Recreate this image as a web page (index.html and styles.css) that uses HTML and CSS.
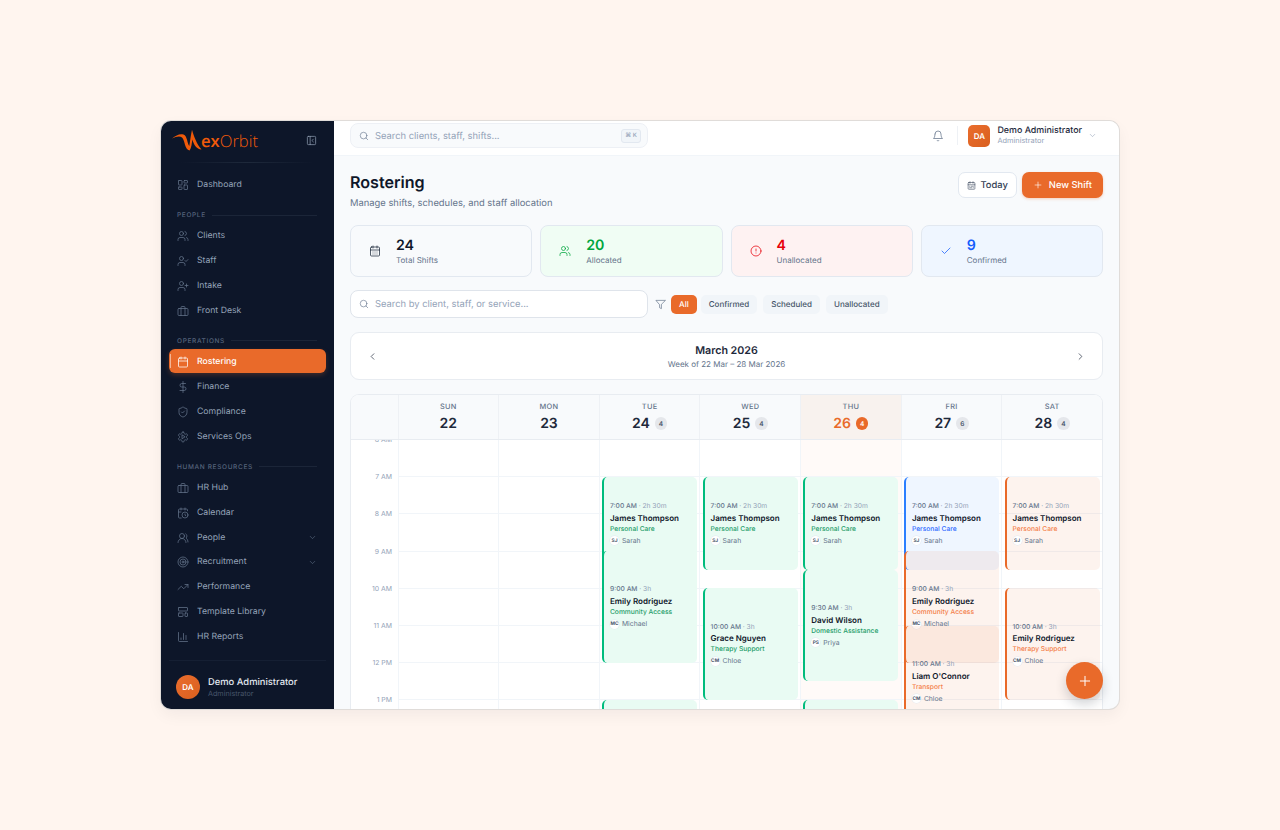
FILE: index.html
```html
<!DOCTYPE html>
<html lang="en">
<head>
  <meta charset="UTF-8">
  <meta name="viewport" content="width=device-width, initial-scale=1.0">
  <title>Rostering</title>
  <link rel="stylesheet" href="styles.css">
</head>
<body>

  <!-- Icon set -->
  <svg class="sprite" xmlns="http://www.w3.org/2000/svg">
    <symbol id="i-dashboard" viewBox="0 0 24 24"><rect x="3" y="3" width="7" height="9" rx="1"/><rect x="14" y="3" width="7" height="5" rx="1"/><rect x="14" y="12" width="7" height="9" rx="1"/><rect x="3" y="16" width="7" height="5" rx="1"/></symbol>
    <symbol id="i-users" viewBox="0 0 24 24"><path d="M16 21v-2a4 4 0 0 0-4-4H6a4 4 0 0 0-4 4v2"/><circle cx="9" cy="7" r="4"/><path d="M22 21v-2a4 4 0 0 0-3-3.87"/><path d="M16 3.13a4 4 0 0 1 0 7.75"/></symbol>
    <symbol id="i-user-check" viewBox="0 0 24 24"><path d="M16 21v-2a4 4 0 0 0-4-4H6a4 4 0 0 0-4 4v2"/><circle cx="9" cy="7" r="4"/><path d="m16 11 2 2 4-4"/></symbol>
    <symbol id="i-user-plus" viewBox="0 0 24 24"><path d="M16 21v-2a4 4 0 0 0-4-4H6a4 4 0 0 0-4 4v2"/><circle cx="9" cy="7" r="4"/><path d="M19 8v6"/><path d="M22 11h-6"/></symbol>
    <symbol id="i-briefcase" viewBox="0 0 24 24"><rect x="2" y="7" width="20" height="14" rx="2"/><path d="M16 21V5a2 2 0 0 0-2-2h-4a2 2 0 0 0-2 2v16"/></symbol>
    <symbol id="i-calendar" viewBox="0 0 24 24"><rect x="3" y="4" width="18" height="18" rx="2"/><path d="M16 2v4"/><path d="M8 2v4"/><path d="M3 10h18"/></symbol>
    <symbol id="i-calendar-days" viewBox="0 0 24 24"><rect x="3" y="4" width="18" height="18" rx="2"/><path d="M16 2v4"/><path d="M8 2v4"/><path d="M3 10h18"/><path d="M8 14h.01M12 14h.01M16 14h.01M8 18h.01M12 18h.01M16 18h.01"/></symbol>
    <symbol id="i-calendar-range" viewBox="0 0 24 24"><rect x="3" y="4" width="18" height="18" rx="2"/><path d="M16 2v4"/><path d="M8 2v4"/><path d="M3 10h18"/><path d="M17 14h-6"/><path d="M13 18H7"/><path d="M7 14h.01"/><path d="M17 18h.01"/></symbol>
    <symbol id="i-calendar-clock" viewBox="0 0 24 24"><path d="M21 7.5V6a2 2 0 0 0-2-2H5a2 2 0 0 0-2 2v14a2 2 0 0 0 2 2h3.5"/><path d="M16 2v4"/><path d="M8 2v4"/><path d="M3 10h5"/><path d="M17.5 17.5 16 16.3V14"/><circle cx="16" cy="16" r="6"/></symbol>
    <symbol id="i-dollar" viewBox="0 0 24 24"><path d="M12 1v22"/><path d="M17 5H9.5a3.5 3.5 0 0 0 0 7h5a3.5 3.5 0 0 1 0 7H6"/></symbol>
    <symbol id="i-shield" viewBox="0 0 24 24"><path d="M20 13c0 5-3.5 7.5-7.66 8.95a1 1 0 0 1-.67-.01C7.5 20.5 4 18 4 13V6a1 1 0 0 1 1-1c2 0 4.5-1.2 6.24-2.72a1.17 1.17 0 0 1 1.52 0C14.51 3.81 17 5 19 5a1 1 0 0 1 1 1z"/><path d="m9 12 2 2 4-4"/></symbol>
    <symbol id="i-cog-play" viewBox="0 0 24 24"><path d="M12.22 2h-.44a2 2 0 0 0-2 2v.18a2 2 0 0 1-1 1.73l-.43.25a2 2 0 0 1-2 0l-.15-.08a2 2 0 0 0-2.73.73l-.22.38a2 2 0 0 0 .73 2.73l.15.1a2 2 0 0 1 1 1.72v.51a2 2 0 0 1-1 1.74l-.15.09a2 2 0 0 0-.73 2.73l.22.38a2 2 0 0 0 2.73.73l.15-.08a2 2 0 0 1 2 0l.43.25a2 2 0 0 1 1 1.73V20a2 2 0 0 0 2 2h.44a2 2 0 0 0 2-2v-.18a2 2 0 0 1 1-1.73l.43-.25a2 2 0 0 1 2 0l.15.08a2 2 0 0 0 2.73-.73l.22-.39a2 2 0 0 0-.73-2.73l-.15-.08a2 2 0 0 1-1-1.74v-.5a2 2 0 0 1 1-1.74l.15-.09a2 2 0 0 0 .73-2.73l-.22-.38a2 2 0 0 0-2.73-.73l-.15.08a2 2 0 0 1-2 0l-.43-.25a2 2 0 0 1-1-1.73V4a2 2 0 0 0-2-2z"/><path d="M10 8.5v7l5.5-3.5z"/></symbol>
    <symbol id="i-users-round" viewBox="0 0 24 24"><path d="M18 21a8 8 0 0 0-16 0"/><circle cx="10" cy="8" r="5"/><path d="M22 20c0-3.37-2-6.5-4-8a5 5 0 0 0-.45-8.3"/></symbol>
    <symbol id="i-target" viewBox="0 0 24 24"><circle cx="12" cy="12" r="10"/><circle cx="12" cy="12" r="6"/><circle cx="12" cy="12" r="2"/></symbol>
    <symbol id="i-trending" viewBox="0 0 24 24"><path d="M22 7 13.5 15.5 8.5 10.5 2 17"/><path d="M16 7h6v6"/></symbol>
    <symbol id="i-template" viewBox="0 0 24 24"><rect x="3" y="3" width="18" height="7" rx="1"/><rect x="3" y="14" width="9" height="7" rx="1"/><rect x="16" y="14" width="5" height="7" rx="1"/></symbol>
    <symbol id="i-chart" viewBox="0 0 24 24"><path d="M3 3v16a2 2 0 0 0 2 2h16"/><path d="M18 17V9"/><path d="M13 17V5"/><path d="M8 17v-3"/></symbol>
    <symbol id="i-chevron-down" viewBox="0 0 24 24"><path d="m6 9 6 6 6-6"/></symbol>
    <symbol id="i-chevron-left" viewBox="0 0 24 24"><path d="m15 18-6-6 6-6"/></symbol>
    <symbol id="i-chevron-right" viewBox="0 0 24 24"><path d="m9 18 6-6-6-6"/></symbol>
    <symbol id="i-panel" viewBox="0 0 24 24"><rect x="3" y="3" width="18" height="18" rx="2"/><path d="M9 3v18"/><path d="m16 15-3-3 3-3"/></symbol>
    <symbol id="i-search" viewBox="0 0 24 24"><circle cx="11" cy="11" r="8"/><path d="m21 21-4.3-4.3"/></symbol>
    <symbol id="i-bell" viewBox="0 0 24 24"><path d="M6 8a6 6 0 0 1 12 0c0 7 3 9 3 9H3s3-2 3-9"/><path d="M10.3 21a1.94 1.94 0 0 0 3.4 0"/></symbol>
    <symbol id="i-plus" viewBox="0 0 24 24"><path d="M5 12h14"/><path d="M12 5v14"/></symbol>
    <symbol id="i-alert" viewBox="0 0 24 24"><circle cx="12" cy="12" r="10"/><path d="M12 8v4"/><path d="M12 16h.01"/></symbol>
    <symbol id="i-check" viewBox="0 0 24 24"><path d="M20 6 9 17l-5-5"/></symbol>
    <symbol id="i-filter" viewBox="0 0 24 24"><path d="M22 3H2l8 9.46V19l4 2v-8.54z"/></symbol>
  </svg>

  <div class="app">

    <aside class="sidebar">
      <div class="brand">
        <div class="logo">
          <svg class="logo-mark" viewBox="0 0 32 22"><path d="M1 9.6C5 6.2 9 4.4 12.5 5.6C16.5 7.2 16 14.5 18.3 17C19 13 19.8 6 21 0.8C22.8 7 25.5 15 30.5 20.5C25.5 20 22.5 15.5 21.4 10.5C20.8 14 20.5 19 18.6 21.6C13.5 20.5 14 11.5 11 8.6C8.5 6.6 5 7.8 1 9.6Z"/></svg>
          <span class="logo-text"><b>ex</b>Orbit</span>
        </div>
        <svg class="icon collapse"><use href="#i-panel"/></svg>
      </div>

      <nav class="nav">
        <a class="nav-item"><svg class="icon"><use href="#i-dashboard"/></svg>Dashboard</a>

        <div class="nav-section">People</div>
        <a class="nav-item"><svg class="icon"><use href="#i-users"/></svg>Clients</a>
        <a class="nav-item"><svg class="icon"><use href="#i-user-check"/></svg>Staff</a>
        <a class="nav-item"><svg class="icon"><use href="#i-user-plus"/></svg>Intake</a>
        <a class="nav-item"><svg class="icon"><use href="#i-briefcase"/></svg>Front Desk</a>

        <div class="nav-section">Operations</div>
        <a class="nav-item active"><svg class="icon"><use href="#i-calendar"/></svg>Rostering</a>
        <a class="nav-item"><svg class="icon"><use href="#i-dollar"/></svg>Finance</a>
        <a class="nav-item"><svg class="icon"><use href="#i-shield"/></svg>Compliance</a>
        <a class="nav-item"><svg class="icon"><use href="#i-cog-play"/></svg>Services Ops</a>

        <div class="nav-section">Human Resources</div>
        <a class="nav-item"><svg class="icon"><use href="#i-briefcase"/></svg>HR Hub</a>
        <a class="nav-item"><svg class="icon"><use href="#i-calendar-clock"/></svg>Calendar</a>
        <a class="nav-item"><svg class="icon"><use href="#i-users-round"/></svg>People<svg class="icon nav-caret"><use href="#i-chevron-down"/></svg></a>
        <a class="nav-item"><svg class="icon"><use href="#i-target"/></svg>Recruitment<svg class="icon nav-caret"><use href="#i-chevron-down"/></svg></a>
        <a class="nav-item"><svg class="icon"><use href="#i-trending"/></svg>Performance</a>
        <a class="nav-item"><svg class="icon"><use href="#i-template"/></svg>Template Library</a>
        <a class="nav-item"><svg class="icon"><use href="#i-chart"/></svg>HR Reports</a>
      </nav>

      <div class="side-user">
        <div class="side-avatar">DA</div>
        <div>
          <div class="side-name">Demo Administrator</div>
          <div class="side-role">Administrator</div>
        </div>
      </div>
    </aside>

    <div class="main">
      <header class="topbar">
        <div class="top-search">
          <svg class="icon"><use href="#i-search"/></svg>
          <span>Search clients, staff, shifts...</span>
          <kbd>⌘ K</kbd>
        </div>
        <div class="top-right">
          <svg class="icon bell"><use href="#i-bell"/></svg>
          <div class="top-divider"></div>
          <div class="top-avatar">DA</div>
          <div class="top-user">
            <div class="top-name">Demo Administrator</div>
            <div class="top-role">Administrator</div>
          </div>
          <svg class="icon top-caret"><use href="#i-chevron-down"/></svg>
        </div>
      </header>

      <main class="content">
        <div class="page-head">
          <div>
            <h1>Rostering</h1>
            <p>Manage shifts, schedules, and staff allocation</p>
          </div>
          <div class="page-actions">
            <button class="btn btn-light"><svg class="icon"><use href="#i-calendar-range"/></svg>Today</button>
            <button class="btn btn-primary"><svg class="icon"><use href="#i-plus"/></svg>New Shift</button>
          </div>
        </div>

        <div class="stats">
          <div class="stat">
            <svg class="icon"><use href="#i-calendar-days"/></svg>
            <div><div class="stat-num">24</div><div class="stat-label">Total Shifts</div></div>
          </div>
          <div class="stat stat-green">
            <svg class="icon"><use href="#i-users"/></svg>
            <div><div class="stat-num">20</div><div class="stat-label">Allocated</div></div>
          </div>
          <div class="stat stat-red">
            <svg class="icon"><use href="#i-alert"/></svg>
            <div><div class="stat-num">4</div><div class="stat-label">Unallocated</div></div>
          </div>
          <div class="stat stat-blue">
            <svg class="icon"><use href="#i-check"/></svg>
            <div><div class="stat-num">9</div><div class="stat-label">Confirmed</div></div>
          </div>
        </div>

        <div class="filters">
          <div class="filter-search">
            <svg class="icon"><use href="#i-search"/></svg>
            <span>Search by client, staff, or service...</span>
          </div>
          <svg class="icon filter-icon"><use href="#i-filter"/></svg>
          <div class="chips">
            <span class="chip active">All</span>
            <span class="chip">Confirmed</span>
            <span class="chip">Scheduled</span>
            <span class="chip">Unallocated</span>
          </div>
        </div>

        <div class="month-bar">
          <svg class="icon"><use href="#i-chevron-left"/></svg>
          <div class="month-title">
            <strong>March 2026</strong>
            <span>Week of 22 Mar – 28 Mar 2026</span>
          </div>
          <svg class="icon"><use href="#i-chevron-right"/></svg>
        </div>

        <div class="calendar">
          <div class="cal-head">
            <div class="cal-corner"></div>
            <div class="day-head"><span class="dow">Sun</span><div class="date"><b>22</b></div></div>
            <div class="day-head"><span class="dow">Mon</span><div class="date"><b>23</b></div></div>
            <div class="day-head"><span class="dow">Tue</span><div class="date"><b>24</b><i>4</i></div></div>
            <div class="day-head"><span class="dow">Wed</span><div class="date"><b>25</b><i>4</i></div></div>
            <div class="day-head today"><span class="dow">Thu</span><div class="date"><b>26</b><i>4</i></div></div>
            <div class="day-head"><span class="dow">Fri</span><div class="date"><b>27</b><i>6</i></div></div>
            <div class="day-head"><span class="dow">Sat</span><div class="date"><b>28</b><i>4</i></div></div>
          </div>

          <div class="cal-body">
            <div class="hours">
              <div class="hour"><span>6 AM</span></div>
              <div class="hour"><span>7 AM</span></div>
              <div class="hour"><span>8 AM</span></div>
              <div class="hour"><span>9 AM</span></div>
              <div class="hour"><span>10 AM</span></div>
              <div class="hour"><span>11 AM</span></div>
              <div class="hour"><span>12 PM</span></div>
              <div class="hour"><span>1 PM</span></div>
            </div>

            <div class="day"></div>
            <div class="day"></div>

            <div class="day">
              <div class="shift green" style="--start:1;--len:2.5"><div class="when">7:00 AM <em>· 2h 30m</em></div><div class="who">James Thompson</div><div class="what">Personal Care</div><div class="staff"><i>SJ</i>Sarah</div></div>
              <div class="shift green" style="--start:3;--len:3"><div class="when">9:00 AM <em>· 3h</em></div><div class="who">Emily Rodriguez</div><div class="what">Community Access</div><div class="staff"><i>MC</i>Michael</div></div>
              <div class="shift green" style="--start:7;--len:2.5"></div>
            </div>

            <div class="day">
              <div class="shift green" style="--start:1;--len:2.5"><div class="when">7:00 AM <em>· 2h 30m</em></div><div class="who">James Thompson</div><div class="what">Personal Care</div><div class="staff"><i>SJ</i>Sarah</div></div>
              <div class="shift green" style="--start:4;--len:3"><div class="when">10:00 AM <em>· 3h</em></div><div class="who">Grace Nguyen</div><div class="what">Therapy Support</div><div class="staff"><i>CM</i>Chloe</div></div>
            </div>

            <div class="day today">
              <div class="shift green" style="--start:1;--len:2.5"><div class="when">7:00 AM <em>· 2h 30m</em></div><div class="who">James Thompson</div><div class="what">Personal Care</div><div class="staff"><i>SJ</i>Sarah</div></div>
              <div class="shift green" style="--start:3.5;--len:3"><div class="when">9:30 AM <em>· 3h</em></div><div class="who">David Wilson</div><div class="what">Domestic Assistance</div><div class="staff"><i>PS</i>Priya</div></div>
              <div class="shift green" style="--start:7;--len:2.5"></div>
            </div>

            <div class="day">
              <div class="shift blue" style="--start:1;--len:2.5"><div class="when">7:00 AM <em>· 2h 30m</em></div><div class="who">James Thompson</div><div class="what">Personal Care</div><div class="staff"><i>SJ</i>Sarah</div></div>
              <div class="shift orange" style="--start:3;--len:3"><div class="when">9:00 AM <em>· 3h</em></div><div class="who">Emily Rodriguez</div><div class="what">Community Access</div><div class="staff"><i>MC</i>Michael</div></div>
              <div class="shift orange" style="--start:5;--len:3"><div class="when">11:00 AM <em>· 3h</em></div><div class="who">Liam O'Connor</div><div class="what">Transport</div><div class="staff"><i>CM</i>Chloe</div></div>
            </div>

            <div class="day">
              <div class="shift orange" style="--start:1;--len:2.5"><div class="when">7:00 AM <em>· 2h 30m</em></div><div class="who">James Thompson</div><div class="what">Personal Care</div><div class="staff"><i>SJ</i>Sarah</div></div>
              <div class="shift orange" style="--start:4;--len:3"><div class="when">10:00 AM <em>· 3h</em></div><div class="who">Emily Rodriguez</div><div class="what">Therapy Support</div><div class="staff"><i>CM</i>Chloe</div></div>
            </div>
          </div>
        </div>
      </main>
    </div>

    <button class="fab"><svg class="icon"><use href="#i-plus"/></svg></button>
  </div>

</body>
</html>
```
FILE: styles.css
```css
* {
  box-sizing: border-box;
}
html, body {
  height: 100%;
}
body {
  margin: 0;
  display: flex;
  align-items: center;
  justify-content: center;
  background-color: #fff5ef;
  font-family: Inter, "Liberation Sans", sans-serif;
  color: #0f172a;
  text-rendering: geometricPrecision;
}
.sprite {
  display: none;
}
.icon {
  width: 12px;
  height: 12px;
  flex: none;
  fill: none;
  stroke: currentColor;
  stroke-width: 1.5;
  stroke-linecap: round;
  stroke-linejoin: round;
}

/* Window */
.app {
  position: relative;
  display: flex;
  width: 958px;
  height: 588px;
  overflow: hidden;
  border-radius: 10px;
  background: #f8fafc;
  box-shadow: 0 0 0 1px #e0dcd9, 0 6px 16px rgba(15, 23, 42, 0.05);
}

/* Sidebar */
.sidebar {
  display: flex;
  flex-direction: column;
  flex: none;
  width: 173px;
  background: #0d1629;
  color: #94a3b8;
}
.brand {
  position: relative;
  display: flex;
  align-items: center;
  justify-content: space-between;
  height: 42px;
  padding: 0 17px 4px 10px;
}
.brand::after {
  content: "";
  position: absolute;
  left: 20px;
  right: 20px;
  bottom: 0;
  height: 1px;
  background: linear-gradient(90deg, transparent, #1e293b, transparent);
}
.logo {
  display: flex;
  align-items: center;
}
.logo-mark {
  width: 32px;
  height: 22px;
  fill: #f05a0a;
  margin-right: -2px;
}
.logo-text {
  font-family: "Open Sans", sans-serif;
  font-size: 16.6px;
  font-weight: 300;
  color: #f05a0a;
}
.logo-text b {
  font-weight: 600;
}
.collapse {
  width: 11px;
  height: 11px;
}
.nav {
  flex: 1;
  padding: 9.5px 8px 0;
}
.nav-item {
  position: relative;
  display: flex;
  align-items: center;
  gap: 8px;
  height: 24px;
  margin-bottom: 0.95px;
  padding: 1px 9px 0 8px;
  border-radius: 6px;
  font-size: 8.7px;
  font-weight: 400;
  color: #94a3b8;
}
.nav-item .icon {
  color: #64748b;
}
.nav-item.active {
  background: #e96a2a;
  color: #fff;
  font-weight: 500;
  box-shadow: 0 2px 5px rgba(233, 106, 42, 0.25);
}
.nav-item.active .icon {
  color: #fff;
}
.nav-item.active::before {
  content: "";
  position: absolute;
  left: 1px;
  top: 5px;
  bottom: 5px;
  width: 1px;
  background: rgba(255, 255, 255, 0.5);
}
.nav-item .nav-caret {
  width: 9px;
  height: 9px;
  margin-left: auto;
  color: #64748b;
}
.nav-section {
  display: flex;
  align-items: center;
  gap: 6px;
  height: 9px;
  margin: 14px 0 4px;
  padding: 0 9px 0 8px;
  font-size: 6.5px;
  font-weight: 500;
  letter-spacing: 0.65px;
  text-transform: uppercase;
  color: #56647c;
}
.nav-section::after {
  content: "";
  flex: 1;
  height: 1px;
  background: #1b2538;
}
.side-user {
  display: flex;
  align-items: center;
  gap: 8px;
  height: 49px;
  margin: 0 8px;
  padding: 4px 0 0 7px;
  border-top: 1px solid #151f33;
}
.side-avatar {
  display: flex;
  align-items: center;
  justify-content: center;
  width: 24px;
  height: 24px;
  border-radius: 50%;
  background: linear-gradient(135deg, #ea6d2d, #d9601f);
  color: #fff;
  font-size: 8px;
  font-weight: 600;
}
.side-name {
  margin-top: 2px;
  font-size: 9.4px;
  font-weight: 500;
  line-height: 12px;
  color: #e2e8f0;
}
.side-role {
  font-size: 7.2px;
  line-height: 10px;
  color: #475569;
}

/* Main column */
.main {
  display: flex;
  flex-direction: column;
  flex: 1;
  min-width: 0;
}
.topbar {
  display: flex;
  align-items: center;
  justify-content: space-between;
  flex: none;
  height: 35px;
  padding: 0 22px 5px 16px;
  background: #fff;
  border-bottom: 1px solid #f1f5f9;
}
.top-search {
  display: flex;
  align-items: center;
  gap: 6px;
  width: 298px;
  height: 25px;
  padding: 1px 6px 0 8px;
  background: #f8fafc;
  border: 1px solid #edf0f5;
  border-radius: 8px;
  font-size: 9.4px;
  color: #94a3b8;
}
.top-search .icon {
  width: 10px;
  height: 10px;
  color: #64748b;
}
.top-search kbd {
  margin-left: auto;
  width: 20px;
  padding: 2px 0;
  background: #f1f5f9;
  border: 1px solid #e2e8f0;
  border-radius: 3px;
  font-family: inherit;
  font-size: 6px;
  line-height: 8px;
  font-weight: 500;
  text-align: center;
  color: #94a3b8;
}
.top-right {
  display: flex;
  align-items: center;
}
.bell {
  color: #64748b;
}
.top-divider {
  width: 1px;
  height: 19px;
  margin: 0 10px 0 13px;
  background: #eef1f5;
}
.top-avatar {
  display: flex;
  align-items: center;
  justify-content: center;
  width: 22px;
  height: 22px;
  border-radius: 5px;
  background: linear-gradient(135deg, #ea6d2d, #d9601f);
  color: #fff;
  font-size: 7.9px;
  font-weight: 600;
}
.top-user {
  margin-left: 7px;
}
.top-name {
  font-size: 8.9px;
  font-weight: 500;
  line-height: 9.5px;
  color: #1e293b;
}
.top-role {
  font-size: 7.4px;
  line-height: 9px;
  color: #94a3b8;
}
.top-caret {
  width: 9px;
  height: 9px;
  margin-left: 6px;
  color: #94a3b8;
}

/* Page content */
.content {
  flex: 1;
  min-height: 0;
  overflow: hidden;
  padding: 16px 16px 0;
}
.page-head {
  display: flex;
  justify-content: space-between;
  height: 38px;
  margin-bottom: 15px;
}
.page-head h1 {
  margin: 0;
  font-size: 16.1px;
  font-weight: 600;
  line-height: 21px;
  color: #0f172a;
}
.page-head p {
  margin: 3.5px 0 0;
  font-size: 9.4px;
  line-height: 14px;
  color: #64748b;
}
.page-actions {
  display: flex;
  gap: 5px;
  height: 26px;
}
.btn {
  display: flex;
  align-items: center;
  gap: 6px;
  height: 26px;
  padding: 0 11px;
  border-radius: 7px;
  font-family: inherit;
  font-size: 9.4px;
  font-weight: 500;
  text-rendering: inherit;
  cursor: pointer;
}
.btn .icon {
  width: 10px;
  height: 10px;
}
.btn-light {
  gap: 4px;
  padding: 0 8px;
  background: #fff;
  border: 1px solid #e2e8f0;
  color: #334155;
}
.btn-light .icon {
  width: 9px;
  height: 9px;
}
.btn-primary {
  background: #e96a2a;
  border: none;
  color: #fff;
  box-shadow: 0 1px 3px rgba(233, 106, 42, 0.3);
}

/* Stat cards */
.stats {
  display: grid;
  grid-template-columns: repeat(4, 1fr);
  gap: 8px;
  margin-bottom: 13px;
}
.stat {
  display: flex;
  align-items: center;
  gap: 15px;
  height: 52px;
  padding-left: 18px;
  background: #f8fafc;
  border: 1px solid #e2e8f0;
  border-radius: 8px;
}
.stat .icon {
  color: #1e293b;
}
.stat-num {
  font-size: 14.2px;
  font-weight: 600;
  line-height: 17px;
  color: #0f172a;
}
.stat-label {
  font-size: 8px;
  line-height: 12px;
  color: #64748b;
}
.stat-green {
  background: #f0fdf4;
}
.stat-green .icon, .stat-green .stat-num {
  color: #00a63e;
}
.stat-red {
  background: #fef2f2;
}
.stat-red .icon, .stat-red .stat-num {
  color: #e7000b;
}
.stat-blue {
  background: #eff6ff;
}
.stat-blue .icon, .stat-blue .stat-num {
  color: #155dfc;
}

/* Filter row */
.filters {
  display: flex;
  align-items: center;
  height: 28px;
  margin-bottom: 14px;
}
.filter-search {
  display: flex;
  align-items: center;
  gap: 6px;
  width: 298px;
  height: 28px;
  padding: 0 8px;
  background: #fff;
  border: 1px solid #dfe4eb;
  border-radius: 8px;
  font-size: 9.4px;
  color: #94a3b8;
}
.filter-search .icon {
  width: 10px;
  height: 10px;
  color: #64748b;
}
.filter-icon {
  width: 11px;
  height: 11px;
  margin: 0 5px 0 7px;
  color: #64748b;
}
.chips {
  display: flex;
  gap: 6px;
}
.chip {
  display: flex;
  align-items: center;
  height: 19px;
  padding: 0 8px;
  background: #f1f5f9;
  border-radius: 5px;
  font-size: 8px;
  font-weight: 500;
  color: #475569;
}
.chip.active {
  margin-right: -2px;
  background: #e96a2a;
  color: #fff;
}

/* Month bar */
.month-bar {
  display: flex;
  align-items: center;
  justify-content: space-between;
  height: 48px;
  margin-bottom: 14px;
  padding: 1.5px 16px 0;
  background: #fff;
  border: 1px solid #e8ecf1;
  border-radius: 9px;
}
.month-bar .icon {
  width: 11px;
  height: 11px;
  color: #1e293b;
}
.month-title {
  display: flex;
  flex-direction: column;
  align-items: center;
}
.month-title strong {
  font-size: 10.7px;
  font-weight: 600;
  line-height: 15px;
  color: #1e293b;
}
.month-title span {
  font-size: 8px;
  line-height: 12px;
  color: #64748b;
}

/* Week calendar */
.calendar {
  --hour: 37.2px;
  background: #fff;
  border: 1px solid #e8ecf1;
  border-bottom: none;
  border-radius: 9px 9px 0 0;
  overflow: hidden;
}
.cal-head, .cal-body {
  display: grid;
  grid-template-columns: 46.5px repeat(7, 1fr);
}
.cal-head {
  height: 45px;
  background: #f8fafc;
  border-bottom: 1px solid #e8ecf1;
}
.day-head {
  display: flex;
  flex-direction: column;
  align-items: center;
  padding-top: 6.5px;
  border-left: 1px solid #eef1f5;
}
.dow {
  font-size: 7.4px;
  font-weight: 500;
  line-height: 10px;
  letter-spacing: 0.3px;
  text-transform: uppercase;
  color: #64748b;
}
.date {
  display: flex;
  align-items: center;
  gap: 5px;
  margin-top: 3px;
  height: 18px;
}
.date b {
  font-size: 14px;
  font-weight: 600;
  color: #1e293b;
}
.date i {
  display: flex;
  align-items: center;
  justify-content: center;
  width: 12.5px;
  height: 12.5px;
  border-radius: 50%;
  background: #e5e7eb;
  font-size: 6.5px;
  font-style: normal;
  font-weight: 600;
  color: #475569;
}
.day-head.today {
  background: #f8f2ee;
}
.day-head.today b {
  color: #e96a2a;
}
.day-head.today i {
  background: #e96a2a;
  color: #fff;
}
.cal-body {
  height: 320px;
}
.hours {
  overflow: hidden;
}
.hour {
  display: flex;
  align-items: flex-start;
  justify-content: flex-end;
  height: var(--hour);
  padding-right: 5.5px;
}
.hour span {
  transform: translateY(-50%);
  font-size: 6.9px;
  line-height: 10px;
  color: #94a3b8;
}
.day {
  position: relative;
  border-left: 1px solid #f1f5f9;
  background: repeating-linear-gradient(to bottom, transparent 0, transparent calc(var(--hour) - 1px), #f1f5f9 calc(var(--hour) - 1px), #f1f5f9 var(--hour));
}
.day.today {
  background-color: #fffaf8;
}

/* Shift blocks are placed on the time axis */
.shift {
  position: absolute;
  left: 2.2px;
  right: 2.4px;
  top: calc(var(--start) * var(--hour) - 0.5px);
  height: calc(var(--len) * var(--hour));
  display: flex;
  flex-direction: column;
  justify-content: center;
  padding-left: 6px;
  border-left: 2px solid;
  border-radius: 5px;
  overflow: hidden;
}
.shift.green {
  background: #e9fbf3;
  border-color: #00bc7d;
}
.shift.green .what {
  color: #1f9d6a;
}
.shift.blue {
  background: #eff6ff;
  border-color: #2b7fff;
}
.shift.blue .what {
  color: #2f6bff;
}
.shift.orange {
  background: rgba(233, 105, 42, 0.08);
  border-color: #e96a2a;
}
.shift.orange .what {
  color: #f47f4a;
}
.when {
  font-size: 6.7px;
  line-height: 10px;
  font-weight: 500;
  color: #64748b;
}
.when em {
  font-style: normal;
  font-weight: 400;
  color: #94a3b8;
}
.who {
  margin-top: 0.8px;
  font-size: 8px;
  font-weight: 600;
  line-height: 12px;
  color: #0f172a;
}
.what {
  font-size: 6.7px;
  font-weight: 500;
  line-height: 10px;
}
.staff {
  display: flex;
  align-items: center;
  gap: 3px;
  margin-top: 2px;
  font-size: 6.8px;
  line-height: 10px;
  color: #64748b;
}
.staff i {
  display: flex;
  align-items: center;
  justify-content: center;
  width: 9px;
  height: 9px;
  border-radius: 50%;
  background: #fff;
  box-shadow: 0 0 0 0.5px #e2e8f0;
  font-size: 4.8px;
  font-style: normal;
  font-weight: 700;
  color: #475569;
}

/* Floating add button */
.fab {
  position: absolute;
  right: 16px;
  bottom: 10px;
  display: flex;
  align-items: center;
  justify-content: center;
  width: 37px;
  height: 37px;
  padding: 0;
  border: none;
  border-radius: 50%;
  background: #e96a2a;
  color: #fff;
  box-shadow: 0 5px 12px rgba(15, 23, 42, 0.2);
}
.fab .icon {
  width: 16px;
  height: 16px;
}
```
